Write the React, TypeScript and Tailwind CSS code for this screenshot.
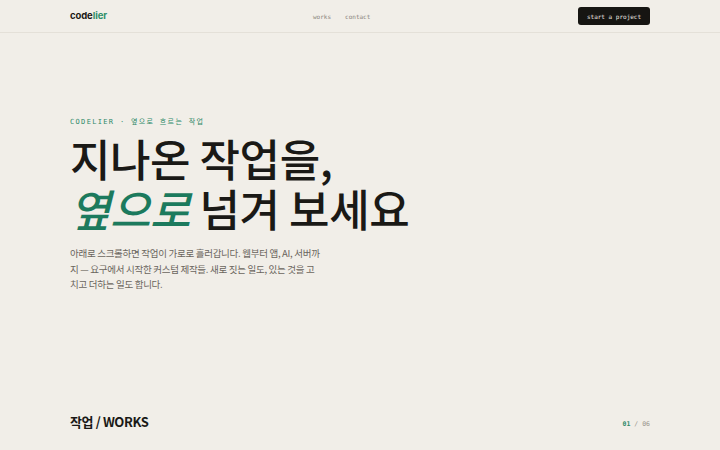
const sans = "font-['Inter','Noto_Sans_CJK_KR',sans-serif]";
const kr = "font-['Noto_Sans_CJK_KR',sans-serif]";
const mono = "font-['DejaVu_Sans_Mono','Noto_Sans_CJK_KR',monospace]";

function Header() {
  return (
    <header className="h-[33px] shrink-0 border-b border-[#e4e0d8] px-[70px] flex items-center">
      <div className={`${sans} text-[9.5px] font-bold tracking-[-0.01em] text-[#1a1916]`}>
        code<span className="text-[#2f8f6a]">lier</span>
      </div>
      <nav className={`${mono} ml-[206px] flex gap-[14px] text-[6px] text-[#8a857c]`}>
        <span>works</span>
        <span>contact</span>
      </nav>
      <button
        className={`${mono} ml-auto h-[18px] w-[72px] rounded-[3px] bg-[#161512] text-[6px] font-normal text-[#ece8e0]`}
      >
        start a project
      </button>
    </header>
  );
}

export default function App() {
  return (
    <div className="w-[720px] h-[450px] bg-[#f1eee8] flex flex-col overflow-hidden">
      <Header />
      <section className="px-[70px] pt-[83px] flex flex-col">
        <p className={`${mono} text-[7px] leading-[12px] tracking-[0.19em] text-[#2f8a68]`}>
          CODELIER · 옆으로 흐르는 작업
        </p>
        <h1
          className={`${kr} mt-[5px] text-[44px] leading-[50px] font-medium tracking-[-0.01em] text-[#1a1916]`}
        >
          지나온 작업을,
          <br />
          <span className="italic text-[#1c7a5d]">옆으로</span> 넘겨 보세요
        </h1>
        <p
          className={`${kr} mt-[13px] w-[252px] break-all text-[9.5px] leading-[15.5px] tracking-[-0.03em] text-[#6a655d]`}
        >
          아래로 스크롤하면 작업이 가로로 흘러갑니다. 웹부터 앱, AI, 서버까지 — 요구에서 시작한 커스텀
          제작들. 새로 짓는 일도, 있는 것을 고치고 더하는 일도 합니다.
        </p>
      </section>
      <div className="mt-auto px-[70px] pb-[19px] flex items-end justify-between">
        <h2 className={`${kr} text-[13px] leading-[18px] font-bold tracking-[-0.03em] text-[#1a1916]`}>
          작업 / WORKS
        </h2>
        <div className={`${mono} text-[6.5px] leading-[14px] text-[#9a958c]`}>
          <span className="font-bold text-[#2f8a68]">01</span> / 06
        </div>
      </div>
    </div>
  );
}
